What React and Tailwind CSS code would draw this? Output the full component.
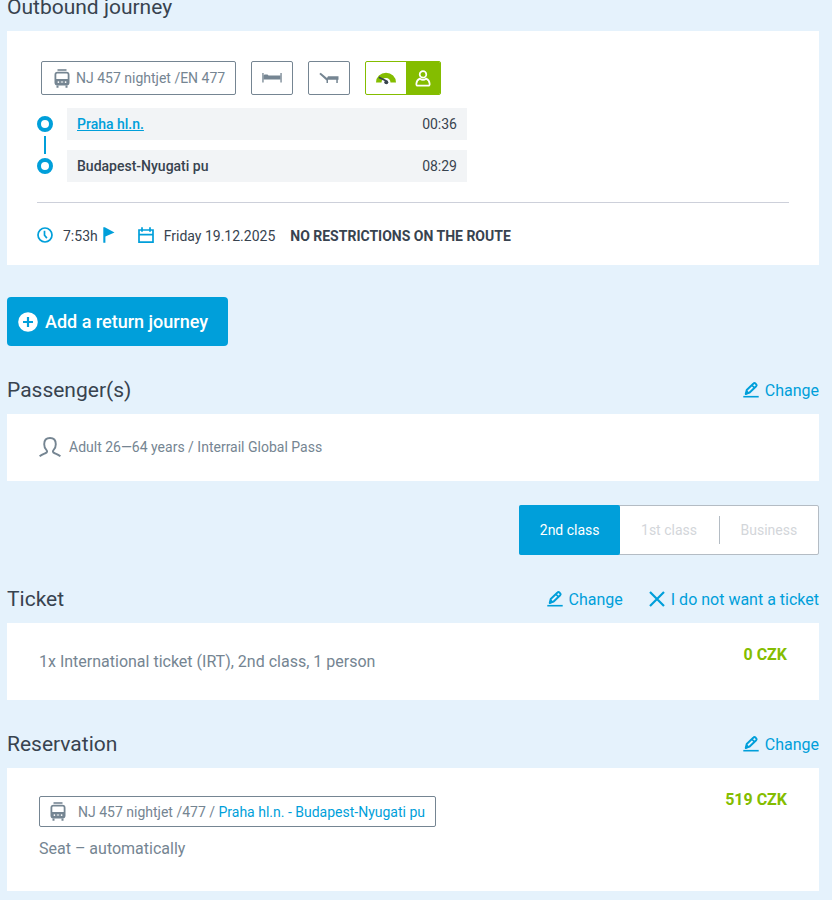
import { useState } from "react";

function TramIcon() {
  return (
    <svg width="16" height="19" viewBox="0 0 16 19" fill="currentColor" aria-hidden="true" className="shrink-0">
      <path d="M3.500 0.200h9v1.600h-9z" />
      <path
        fillRule="evenodd"
        d="M3.500 2.800h9C14.400 2.800 15.500 4 15.500 5.700v8.100c0 1.600-1 2.700-2.600 2.700H3.100C1.500 16.500.5 15.400.5 13.800V5.700C.5 4 1.600 2.800 3.500 2.800zM3.200 4.600c-.6 0-.9.4-.9.9v4.600h11.400V5.500c0-.5-.3-.9-.9-.9zM4.400 12.200a.9.9 0 1 0 0 1.800.9.9 0 0 0 0-1.800zM11.600 12.200a.9.9 0 1 0 0 1.800.9.9 0 0 0 0-1.800zM6.800 12.600h2.400v1H6.800z"
      />
      <path d="M2.500 16.500h2v2.200h-2zM11.500 16.500h2v2.200h-2z" />
    </svg>
  );
}

function BedIcon() {
  return (
    <svg width="20" height="12" viewBox="0 0 20 12" fill="currentColor" aria-hidden="true">
      <path d="M0.300 1h1.300v9.500H0.300zM18.400 1h1.300v9.500h-1.300z" />
      <path d="M1.500 3.400L2.500 2.400h3l1 1h12v4.100h-17z" />
    </svg>
  );
}

function CouchetteIcon() {
  return (
    <svg width="20" height="12" viewBox="0 0 20 12" fill="currentColor" aria-hidden="true">
      <path d="M0.300 1.900L1.700 0.700 8 6 9 4.300h10.500v3.400h-.7V11h-1.500V7.700H9V11H7.500V8.500z" />
    </svg>
  );
}

function GaugeIcon() {
  return (
    <svg width="20" height="13" viewBox="0 0 20 13" aria-hidden="true">
      <path d="M0 10.500a10 9.800 0 0 1 20 0h-5.500a4.500 4.500 0 0 0-9 0z" fill="#84bd00" />
      <path d="M2.800 5.200L10.500 9" stroke="#38434f" strokeWidth="1.800" />
      <circle cx="10.300" cy="10.200" r="2" fill="#38434f" />
    </svg>
  );
}

function SeatedPersonIcon() {
  return (
    <svg width="16" height="17" viewBox="0 0 16 17" fill="none" stroke="currentColor" strokeWidth="1.700" aria-hidden="true">
      <circle cx="8" cy="4.400" r="3.300" />
      <path d="M4.800 8.600C2.500 9.600 1.500 11.600 1.300 14q0 1.700 1.600 1.700h10.200q1.600 0 1.600-1.700c-.2-2.400-1.200-4.400-3.500-5.400-1.800 1.500-4.600 1.500-6.400 0z" strokeLinejoin="round" />
    </svg>
  );
}

function ClockIcon() {
  return (
    <svg width="16" height="16" viewBox="0 0 16 16" fill="none" stroke="currentColor" strokeWidth="1.700" aria-hidden="true">
      <circle cx="8" cy="8" r="7" />
      <path d="M7.500 3.800v4.400l2.400 2.900" />
    </svg>
  );
}

function FlagIcon() {
  return (
    <svg width="12" height="16" viewBox="0 0 12 16" fill="currentColor" aria-hidden="true">
      <path d="M0.300 0.300h1.500L11.500 5.500 2.400 9.600v6.100H0.300z" />
    </svg>
  );
}

function CalendarIcon() {
  return (
    <svg width="16" height="16" viewBox="0 0 16 16" fill="none" stroke="currentColor" strokeWidth="1.700" aria-hidden="true">
      <path d="M1 3h14v12.200H1zM1 7.600h14M4 0.200v4.500M12 0.200v4.500" />
    </svg>
  );
}

function PlusIcon() {
  return (
    <svg width="20" height="20" viewBox="0 0 20 20" aria-hidden="true">
      <circle cx="10" cy="10" r="9.800" fill="#fff" />
      <path d="M10 5v10M5 10h10" stroke="#009fda" strokeWidth="2.200" />
    </svg>
  );
}

function PassengerIcon() {
  return (
    <svg width="22" height="20" viewBox="0 0 22 20" fill="none" stroke="currentColor" strokeWidth="1.900" strokeLinejoin="round" aria-hidden="true">
      <path d="M0.600 19.200c1.900-1.600 3.900-2.300 6.100-3.200 1.500-.6 1.800-1.900.8-2.900C6 11.700 5.200 9.600 5.200 7.200 5.200 3.300 7.200 1 11 1s5.800 2.300 5.800 6.200c0 2.400-.8 4.500-2.300 5.900-1 1-.7 2.300.8 2.900 2.200.9 4.200 1.600 6.100 3.200" />
    </svg>
  );
}

function PencilIcon() {
  return (
    <svg width="16" height="16" viewBox="0 0 16 16" fill="none" stroke="currentColor" aria-hidden="true">
      <path d="M0.300 14.700h15.400" strokeWidth="1.600" />
      <path d="M2.700 12l1-4 6.800-6.500c.6-.6 1.300-.6 1.900 0l.8.800c.6.600.6 1.300 0 1.900L6.400 10.700z" strokeWidth="1.900" strokeLinejoin="round" />
      <path d="M2 12.900l1.500-4.900 3.300 3.100z" fill="currentColor" stroke="none" />
      <path d="M9 3.400l2.600 2.500" strokeWidth="1.500" />
    </svg>
  );
}

function CrossIcon() {
  return (
    <svg width="16" height="16" viewBox="0 0 16 16" fill="none" stroke="currentColor" strokeWidth="2.200" aria-hidden="true">
      <path d="M1 1l14 14M15 1L1 15" />
    </svg>
  );
}

function ActionLink({ icon, children }) {
  return (
    <a href="#" className="flex items-center gap-[6px] text-base text-[#009fda]">
      <span className="pb-[3px]">{icon}</span>
      {children}
    </a>
  );
}

function SectionHeader({ title, children }) {
  return (
    <header className="mb-2 flex h-8 items-center justify-between">
      <h2 className="text-[21px] leading-8 text-[#38434f]">{title}</h2>
      <div className="flex gap-[26px] pt-[2px]">{children}</div>
    </header>
  );
}

function Stop({ time, children }) {
  return (
    <li className="flex h-8 items-center justify-between bg-[#f2f4f6] px-[10px]">
      {children}
      <time>{time}</time>
    </li>
  );
}

const ring = "size-4 rounded-full border-4 border-[#009fda] bg-white";
const pill = "flex h-[34px] items-center justify-center rounded-xs border border-[#758592] text-[#758592]";
const classes = ["2nd class", "1st class", "Business"];

export default function App() {
  const [selected, setSelected] = useState("2nd class");

  return (
    <div className="min-h-screen overflow-hidden bg-[#e5f2fc] font-[Roboto,sans-serif] text-sm text-[#38434f]">
      <main className="-mt-[9px] pr-[13px] pb-[9px] pl-[7px]">
        <section>
          <SectionHeader title="Outbound journey" />
          <div className="bg-white px-[30px] pt-[30px] pb-[17px]">
            <div className="flex flex-wrap gap-[15px] pl-1">
              <div className={pill + " gap-[6px] pr-[10px] pl-3"}>
                <TramIcon />
                NJ 457 nightjet /EN 477
              </div>
              <div className={pill + " w-[42px]"}>
                <BedIcon />
              </div>
              <div className={pill + " w-[42px]"}>
                <CouchetteIcon />
              </div>
              <div className="flex h-[34px] w-[76px] overflow-hidden rounded-xs border border-[#84bd00]">
                <div className="flex w-10 items-center justify-center">
                  <GaugeIcon />
                </div>
                <div className="flex grow items-center justify-center bg-[#84bd00] text-white">
                  <SeatedPersonIcon />
                </div>
              </div>
            </div>

            <div className="mt-[13px] flex gap-[14px]">
              <div className="flex flex-col items-center gap-1 py-2">
                <span className={ring} />
                <span className="h-[18px] w-[2px] bg-[#009fda]" />
                <span className={ring} />
              </div>
              <ol className="flex w-full max-w-[400px] flex-col gap-[10px]">
                <Stop time="00:36">
                  <a href="#" className="font-medium text-[#009fda] underline">Praha hl.n.</a>
                </Stop>
                <Stop time="08:29">
                  <span className="font-medium">Budapest-Nyugati pu</span>
                </Stop>
              </ol>
            </div>

            <hr className="mt-5 border-[#cdd0da]" />

            <div className="mt-[21px] flex flex-wrap items-center leading-6">
              <span className="pb-[2px] text-[#009fda]">
                <ClockIcon />
              </span>
              <span className="ml-[10px]">7:53h</span>
              <span className="ml-[5px] pb-[2px] text-[#009fda]">
                <FlagIcon />
              </span>
              <span className="ml-[23px] pb-[2px] text-[#009fda]">
                <CalendarIcon />
              </span>
              <span className="ml-[10px]">Friday 19.12.2025</span>
              <strong className="ml-[15px] font-bold">NO RESTRICTIONS ON THE ROUTE</strong>
            </div>
          </div>
        </section>

        <button type="button" className="mt-8 flex h-[49px] items-center gap-[7px] rounded-sm bg-[#009fda] pr-5 pl-[11px] text-lg font-medium text-white">
          <PlusIcon />
          Add a return journey
        </button>

        <section className="mt-7">
          <SectionHeader title="Passenger(s)">
            <ActionLink icon={<PencilIcon />}>Change</ActionLink>
          </SectionHeader>
          <div className="flex items-center gap-2 bg-white px-8 pt-[23px] pb-6 text-[#758592]">
            <PassengerIcon />
            Adult 26—64 years / Interrail Global Pass
          </div>
        </section>

        <div className="mt-6 ml-auto grid h-[50px] w-[300px] grid-cols-3 rounded-xs border border-[#b4bcc4] bg-white" role="group" aria-label="Class">
          {classes.map((name, i) => (
            <button
              key={name}
              type="button"
              aria-pressed={selected === name}
              onClick={() => setSelected(name)}
              className={
                selected === name
                  ? "-m-px rounded-xs bg-[#009fda] text-white"
                  : i === 2
                    ? "my-[10px] border-l border-[#b4bcc4] text-[#d3d6da]"
                    : "text-[#d3d6da]"
              }
            >
              {name}
            </button>
          ))}
        </div>

        <section className="mt-7">
          <SectionHeader title="Ticket">
            <ActionLink icon={<PencilIcon />}>Change</ActionLink>
            <ActionLink icon={<CrossIcon />}>I do not want a ticket</ActionLink>
          </SectionHeader>
          <div className="flex justify-between bg-white px-8 pt-5 pb-[26px] text-base text-[#758592]">
            <p className="pt-[7px]">1x International ticket (IRT), 2nd class, 1 person</p>
            <strong className="font-bold text-[#84bd00]">0 CZK</strong>
          </div>
        </section>

        <section className="mt-7">
          <SectionHeader title="Reservation">
            <ActionLink icon={<PencilIcon />}>Change</ActionLink>
          </SectionHeader>
          <div className="flex justify-between bg-white px-8 pt-5 pb-[30px] text-base text-[#758592]">
            <div className="pt-2">
              <div className="flex h-[31px] items-center rounded-xs border border-[#758592] px-[10px] text-sm">
                <TramIcon />
                <span className="ml-3">
                  NJ 457 nightjet /477 / <span className="text-[#009fda]">Praha hl.n. - Budapest-Nyugati pu</span>
                </span>
              </div>
              <p className="mt-[10px]">Seat – automatically</p>
            </div>
            <strong className="font-bold text-[#84bd00]">519 CZK</strong>
          </div>
        </section>
      </main>
    </div>
  );
}
